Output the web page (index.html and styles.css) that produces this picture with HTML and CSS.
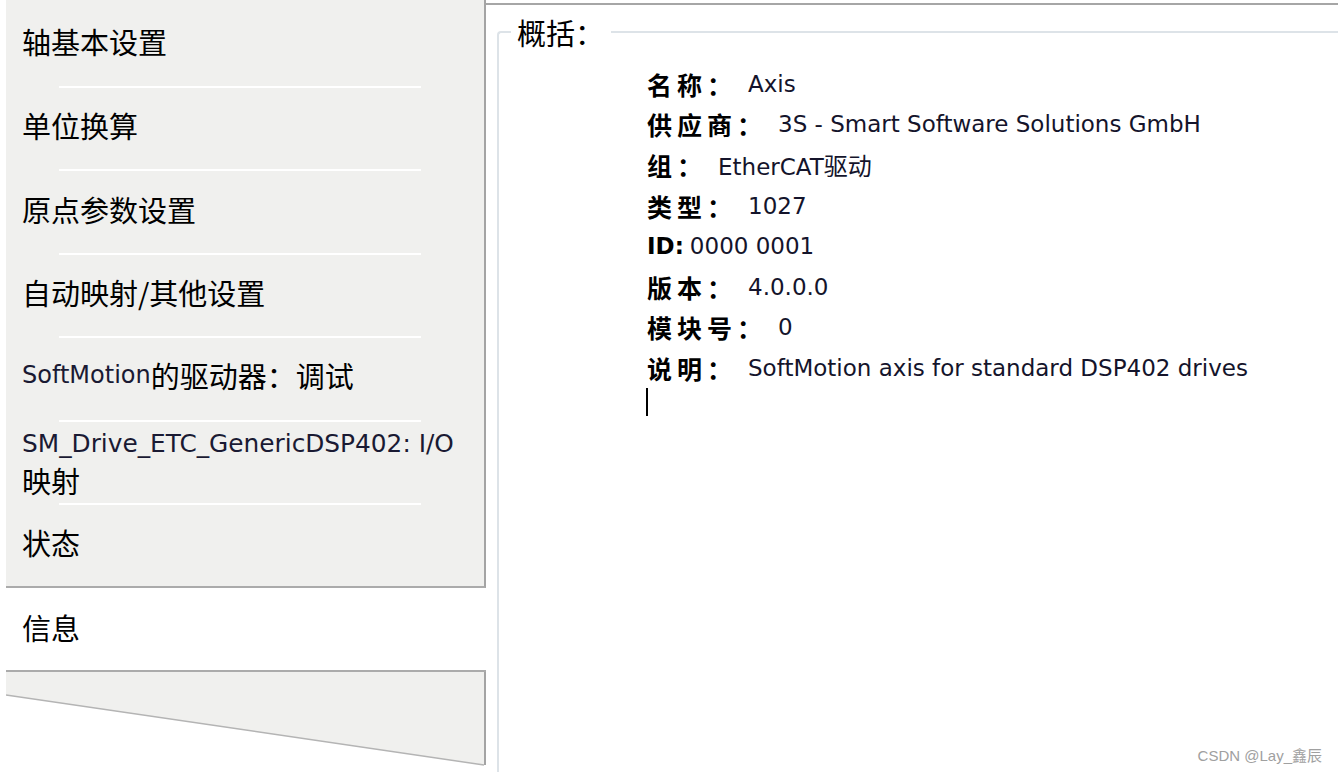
FILE: index.html
```html
<!DOCTYPE html>
<html lang="zh-CN">
<head>
    <meta charset="UTF-8">
    <title>Axis - 信息</title>
    <link rel="stylesheet" href="styles.css">
</head>
<body>
<div class="window">
    <!-- Left tab list -->
    <aside class="sidebar">
        <ul class="tabs">
            <li class="tab tab-first">轴基本设置</li>
            <li class="divider"></li>
            <li class="tab">单位换算</li>
            <li class="divider"></li>
            <li class="tab">原点参数设置</li>
            <li class="divider"></li>
            <li class="tab">自动映射/其他设置</li>
            <li class="divider"></li>
            <li class="tab"><span class="latin">SoftMotion</span>的驱动器：调试</li>
            <li class="divider"></li>
            <li class="tab tab-wrap">
                <span class="line latin latin-wide">SM_Drive_ETC_GenericDSP402: I/O</span>
                <span class="line">映射</span>
            </li>
            <li class="divider"></li>
            <li class="tab">状态</li>
        </ul>
        <div class="tab tab-active">信息</div>
        <div class="tab-rest">
            <svg width="480" height="100" viewBox="0 0 480 100">
                <polygon points="0,0 480,0 480,93 0,23" fill="#f0f0ee"/>
                <line x1="0" y1="23" x2="478" y2="93" stroke="#b4b4b4" stroke-width="1.5"/>
                <line x1="479" y1="0" x2="479" y2="93" stroke="#a4a4a4" stroke-width="2"/>
            </svg>
        </div>
    </aside>

    <!-- Info page -->
    <main class="content">
        <fieldset class="summary">
            <legend>概括：</legend>
            <div class="info">
                <div class="row"><span class="label">名称：</span><span class="value">Axis</span></div>
                <div class="row"><span class="label">供应商：</span><span class="value">3S - Smart Software Solutions GmbH</span></div>
                <div class="row"><span class="label">组：</span><span class="value">EtherCAT<span class="cjk">驱动</span></span></div>
                <div class="row"><span class="label">类型：</span><span class="value">1027</span></div>
                <div class="row"><span class="label label-id">ID:</span><span class="value value-id">0000 0001</span></div>
                <div class="row"><span class="label">版本：</span><span class="value">4.0.0.0</span></div>
                <div class="row"><span class="label">模块号：</span><span class="value">0</span></div>
                <div class="row"><span class="label">说明：</span><span class="value">SoftMotion axis for standard DSP402 drives</span></div>
                <div class="row caret-row"><span class="caret"></span></div>
            </div>
        </fieldset>
        <div class="watermark">CSDN @Lay_鑫辰</div>
    </main>
</div>
</body>
</html>
```

FILE: styles.css
```css
/* General */
body {
    margin: 0;
    background: #fff;
    color: #111;
    font-family: "Noto Sans CJK SC", sans-serif;
    overflow: hidden;
}

.window {
    display: flex;
    height: 772px;
}

/* Sidebar */
.sidebar {
    width: 480px;
    margin-left: 6px;
    display: flex;
    flex-direction: column;
}

.tabs {
    list-style: none;
    margin: 0;
    padding: 0;
    background: #f0f0ee;
    border-right: 2px solid #a4a4a4;
    border-bottom: 2px solid #ababab;
}

.tab {
    height: 81.4px;
    box-sizing: border-box;
    display: flex;
    align-items: center;
    padding-left: 16px;
    padding-bottom: 7px;
    font-size: 29px;
    color: #000;
    white-space: nowrap;
}

.tab-first {
    height: 86px;
    padding-bottom: 4px;
}

.tab-wrap {
    display: block;
    padding-top: 4px;
    padding-bottom: 0;
}

.line {
    display: block;
    height: 36px;
    line-height: 36px;
}

.latin {
    font-family: "DejaVu Sans", sans-serif;
    font-size: 24px;
    color: #1a1a33;
}

.latin-wide {
    font-size: 24.8px;
}

.divider {
    height: 2px;
    width: 362px;
    margin-left: 53px;
    background: #fff;
}

.tab-active {
    height: 82px;
    background: #fff;
    padding-bottom: 5px;
}

.tab-rest {
    flex: 1;
    border-top: 2px solid #ababab;
}

.tab-rest svg {
    display: block;
}

/* Content */
.content {
    flex: 1;
    position: relative;
    margin-top: 3px;
    border-top: 2px solid #a6a6a6;
    background: #fff;
}

.summary {
    margin: 10px 0 0 11px;
    padding: 0 0 0 12px;
    height: 760px;
    border: 2px solid #dde3e8;
    border-right: none;
    border-bottom: none;
    border-top-left-radius: 4px;
}

.summary legend {
    padding: 0 7px 0 6px;
    font-size: 29px;
    line-height: 34px;
    color: #000;
}

.info {
    margin-left: 136px;
    padding-top: 14.5px;
}

.row {
    height: 40.6px;
    display: flex;
    align-items: center;
    white-space: nowrap;
}

.label {
    font-weight: 700;
    font-size: 25px;
    letter-spacing: 5px;
    color: #000;
}

.label-id {
    font-family: "DejaVu Sans", sans-serif;
    font-size: 23px;
    letter-spacing: 0;
}

.value {
    margin-left: 11px;
    font-family: "DejaVu Sans", "Noto Sans CJK SC", sans-serif;
    font-size: 23px;
    color: #14142b;
}

.value-id {
    margin-left: 6px;
}

.cjk {
    font-family: "Noto Sans CJK SC", sans-serif;
    font-size: 24px;
}

.caret-row {
    align-items: flex-start;
}

.caret {
    width: 2px;
    height: 28px;
    margin-left: -1px;
    background: #000;
}

.watermark {
    position: absolute;
    right: 16px;
    bottom: 7px;
    font-family: "Liberation Sans", "Noto Sans CJK SC", sans-serif;
    font-size: 15px;
    color: #a0a0a0;
}
```
